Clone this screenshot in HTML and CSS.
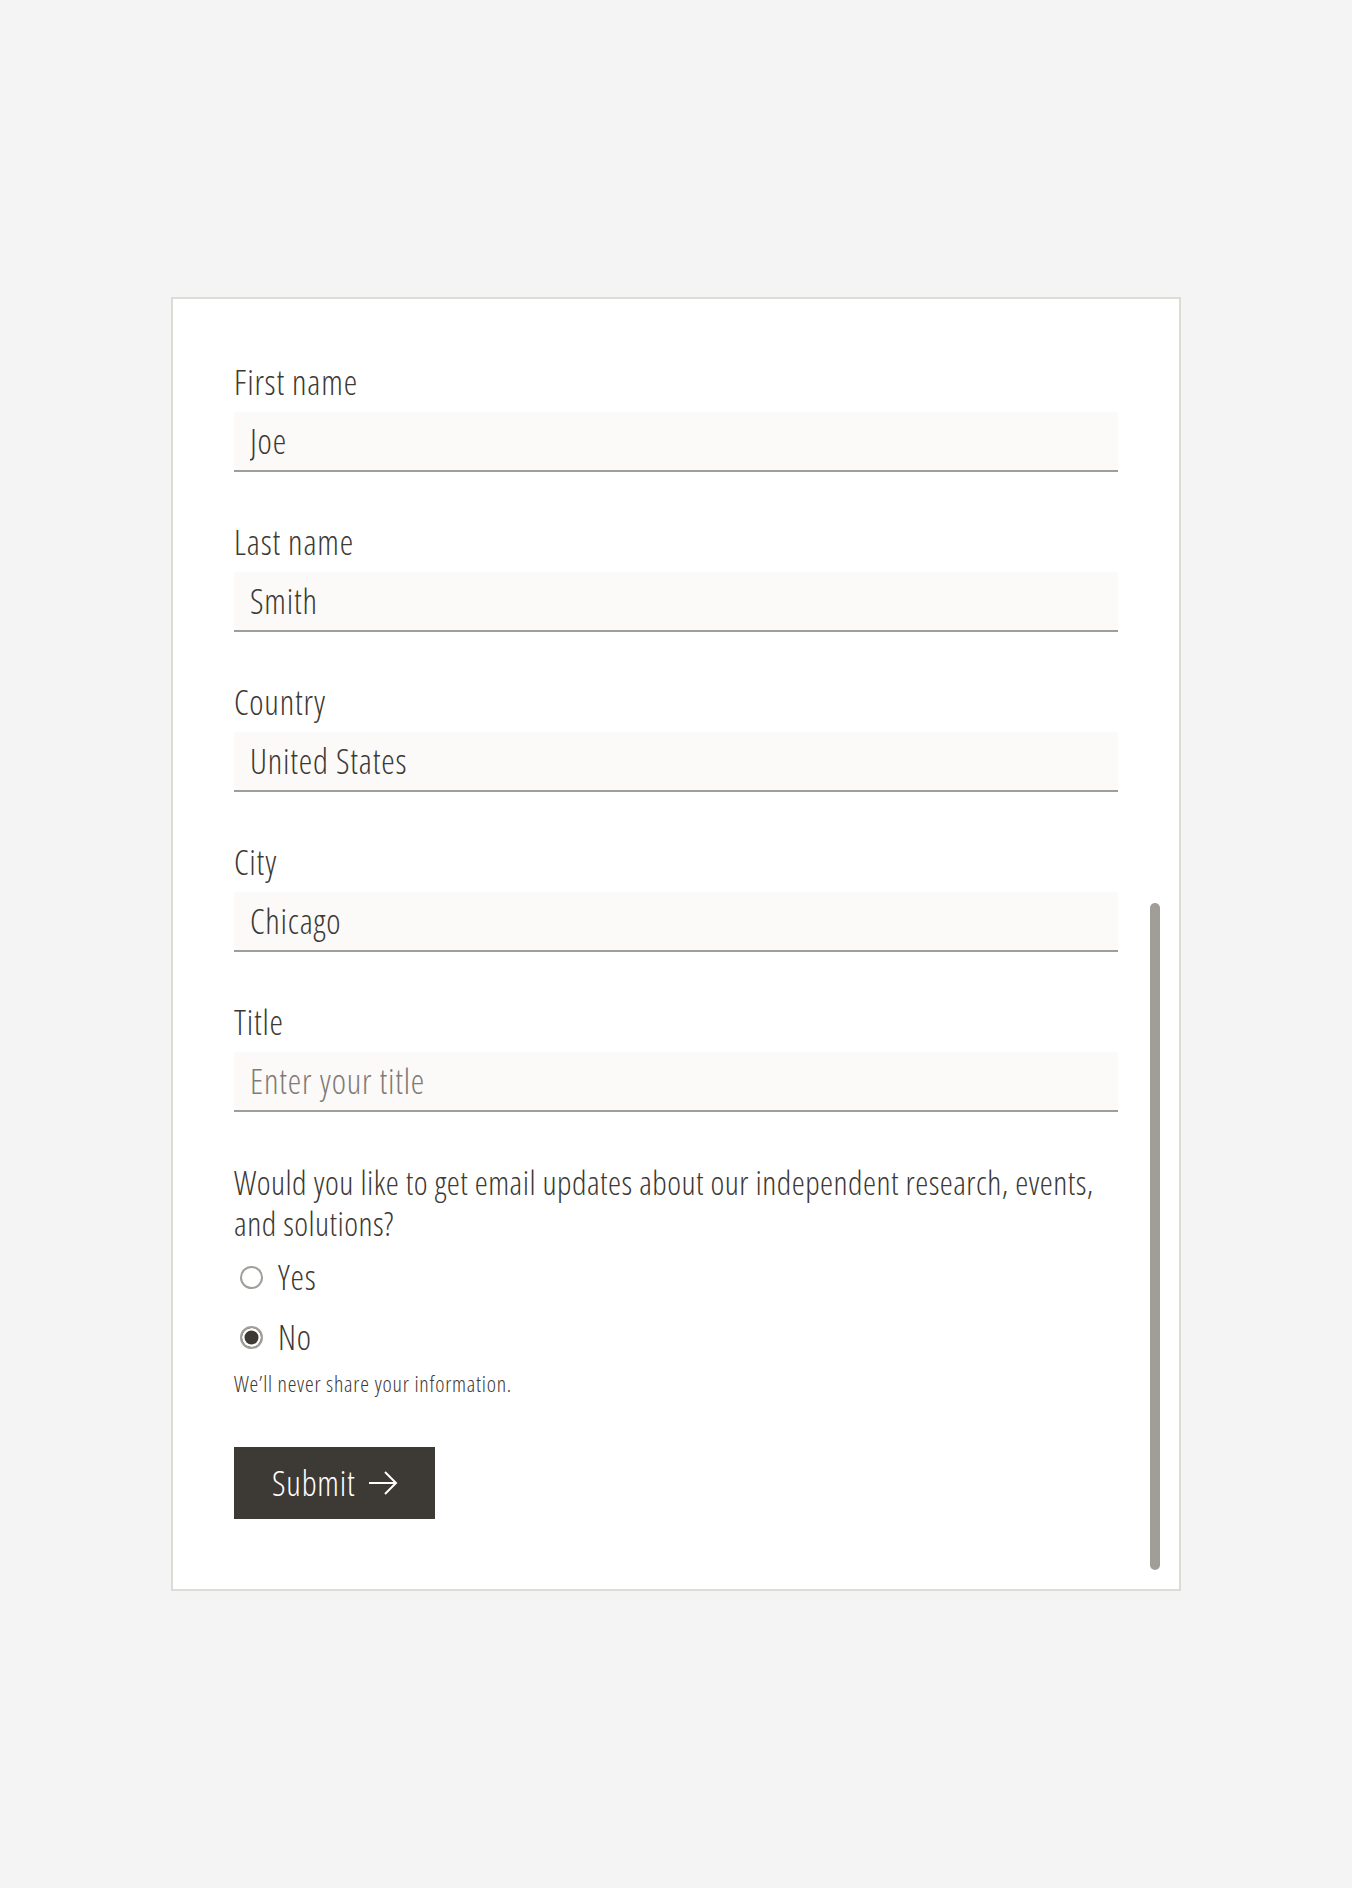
FILE: index.html
```html
<!DOCTYPE html>
<html lang="en">
  <head>
    <meta charset="UTF-8" />
    <meta name="viewport" content="width=device-width, initial-scale=1.0" />
    <title>Sign up</title>
    <link rel="stylesheet" href="styles.css">
  </head>
  <body>
    <div class="card">
      <form class="form">
        <div class="field">
          <label class="label" for="first">First name</label>
          <input class="input" id="first" type="text" value="Joe">
        </div>
        <div class="field">
          <label class="label" for="last">Last name</label>
          <input class="input" id="last" type="text" value="Smith">
        </div>
        <div class="field">
          <label class="label" for="country">Country</label>
          <input class="input" id="country" type="text" value="United States">
        </div>
        <div class="field">
          <label class="label" for="city">City</label>
          <input class="input" id="city" type="text" value="Chicago">
        </div>
        <div class="field">
          <label class="label" for="title">Title</label>
          <input class="input" id="title" type="text" placeholder="Enter your title">
        </div>

        <fieldset class="question">
          <legend class="question-text">Would you like to get email updates about our independent research, events, and solutions?</legend>
          <div class="options">
            <label class="option">
              <input class="radio" type="radio" name="updates" value="yes">
              <span>Yes</span>
            </label>
            <label class="option">
              <input class="radio" type="radio" name="updates" value="no" checked>
              <span>No</span>
            </label>
          </div>
          <p class="hint">We’ll never share your information.</p>
        </fieldset>

        <button class="submit" type="button">
          Submit
          <svg class="arrow" width="30" height="24" viewBox="0 0 30 24" fill="none" stroke="currentColor" stroke-width="2">
            <path d="M1 12h27" />
            <path d="M17 1l11 11-11 11" />
          </svg>
        </button>
      </form>
      <!-- fake overlay scroll thumb, the form is scrolled to the bottom -->
      <div class="thumb"></div>
    </div>
  </body>
</html>
```

FILE: styles.css
```css
* {
  box-sizing: border-box;
}
:root {
  --ink: #3d3935;
  --line: #a19e98;
}
body {
  margin: 0;
  min-height: 100vh;
  background-color: #f4f4f4;
  display: flex;
  justify-content: center;
  align-items: center;
  font-family: "Open Sans", sans-serif;
  font-stretch: 75%; /* condensed cut */
  font-weight: 300;
  letter-spacing: 0.8px;
  color: var(--ink);
}
.card {
  position: relative;
  width: 1010px;
  background-color: #fff;
  border: 2px solid #dedbd6;
  padding: 63px 61px 70px;
}
.form {
  display: flex;
  flex-direction: column;
}
.field {
  display: flex;
  flex-direction: column;
  gap: 10px;
  margin-bottom: 50px;
}
.label {
  font-size: 34px;
  line-height: 40px;
}
.input {
  height: 60px;
  border: none;
  border-bottom: 2px solid var(--line);
  background-color: #fbfaf8;
  padding: 0 16px;
  font: inherit;
  font-size: 34px;
  letter-spacing: 0.8px;
  color: var(--ink);
  outline: none;
}
.input::placeholder {
  color: #7f7b76;
}

.question {
  border: none;
  margin: 0;
  padding: 0;
}
.question-text {
  padding: 0;
  font-size: 33px;
  line-height: 41px;
  letter-spacing: 0.45px;
}
.options {
  display: flex;
  flex-direction: column;
  gap: 20px;
  margin-top: 13px;
}
.option {
  display: flex;
  align-items: center;
  gap: 15px;
  height: 40px;
  padding-left: 6px;
  font-size: 34px;
}
.radio {
  appearance: none;
  -webkit-appearance: none;
  margin: 0;
  width: 23px;
  height: 23px;
  border: 2px solid var(--line);
  border-radius: 50%;
  background-color: #fff;
}
.radio:checked {
  background-color: var(--ink);
  box-shadow: inset 0 0 0 2.5px #fff;
}
.hint {
  margin: 12px 0 0;
  font-size: 22px;
  line-height: 28px;
  letter-spacing: 0.75px;
}

.submit {
  align-self: flex-start;
  display: inline-flex;
  align-items: center;
  gap: 12px;
  height: 72px;
  margin-top: 50px;
  padding: 0 37px 0 38px;
  border: none;
  background-color: var(--ink);
  color: #fff;
  font: inherit;
  font-size: 34px;
  letter-spacing: 0.8px;
  cursor: pointer;
}

.thumb {
  position: absolute;
  top: 604px;
  right: 19px;
  width: 10px;
  height: 667px;
  border-radius: 5px;
  background-color: var(--line);
}
```
